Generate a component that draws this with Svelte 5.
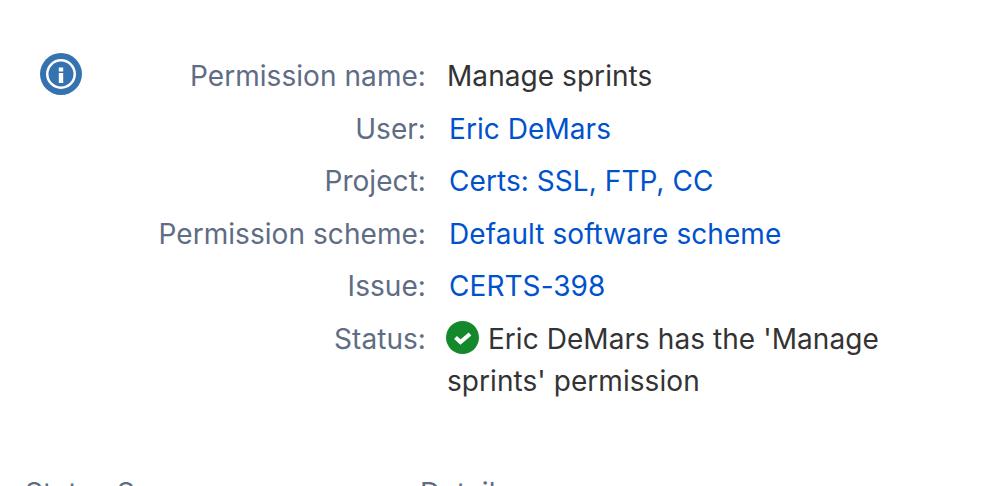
<script>
  const rows = [
    { label: "User:", value: "Eric DeMars" },
    { label: "Project:", value: "Certs: SSL, FTP, CC" },
    { label: "Permission scheme:", value: "Default software scheme" },
    { label: "Issue:", value: "CERTS-398" },
  ];
</script>

<div class="page">
  <div class="summary">
    <svg class="info" viewBox="0 0 42 42" width="42" height="42" aria-hidden="true">
      <circle cx="21" cy="21" r="21" fill="#3572b0" />
      <circle cx="21" cy="21" r="13.75" fill="none" stroke="#fff" stroke-width="2.5" />
      <rect x="18.8" y="14.5" width="4.4" height="4" fill="#fff" />
      <rect x="18.8" y="20" width="4.4" height="10" fill="#fff" />
    </svg>
    <dl class="details">
      <dt>Permission name:</dt>
      <dd class="plain">Manage sprints</dd>
      {#each rows as row}
        <dt>{row.label}</dt>
        <dd><a href="#top">{row.value}</a></dd>
      {/each}
      <dt>Status:</dt>
      <dd class="plain status">
        <svg class="ok" viewBox="0 0 33 33" width="33" height="33" aria-hidden="true">
          <circle cx="16.5" cy="16.5" r="16.5" fill="#14892c" />
          <path d="M9.5 16.5l5 4.5 9.5-8" fill="none" stroke="#fff" stroke-width="4" />
        </svg>
        Eric DeMars has the 'Manage sprints' permission
      </dd>
    </dl>
  </div>
  <div class="columns">
    <h3>Status Summary</h3>
    <h3>Details</h3>
  </div>
</div>

<style>
  :global(body) {
    margin: 0;
    background: #fff;
  }

  .page {
    height: 486px;
    overflow: hidden;
    font-family: Inter, "Noto Sans", sans-serif;
    font-size: 28px;
    letter-spacing: 0.06px;
    color: #333;
    padding-top: 53px;
    box-sizing: border-box;
  }

  .summary {
    display: flex;
    padding-left: 40px;
  }

  .info {
    flex: none;
  }

  .details {
    margin: 2px 0 0;
    width: 838px;
    display: grid;
    grid-template-columns: 344px 440px;
    column-gap: 21px;
    line-height: 42px;
    row-gap: 10.5px;
  }

  dt {
    text-align: right;
    color: #5e6c84;
  }

  dd {
    margin: 0;
    padding-left: 2px;
  }

  dd.plain {
    padding-left: 0;
  }

  a {
    color: #0052cc;
    text-decoration: none;
  }

  .ok {
    vertical-align: -5px;
    margin-left: -1px;
    margin-right: 1px;
  }

  .columns {
    display: flex;
    margin-top: 70px;
    padding-left: 25px;
  }

  h3 {
    margin: 0;
    font-size: 28px;
    font-weight: 400;
    color: #5e6c84;
    line-height: 42px;
  }

  h3:first-child {
    width: 395px;
  }
</style>
